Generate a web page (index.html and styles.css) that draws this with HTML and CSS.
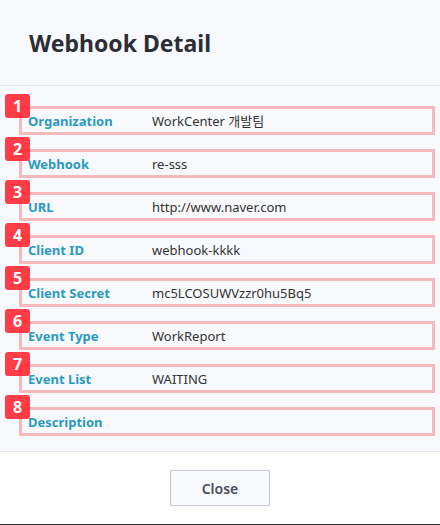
FILE: index.html
```html
<!DOCTYPE html>
<html lang="ko">
<head>
<meta charset="utf-8">
<title>Webhook Detail</title>
<link rel="stylesheet" href="styles.css">
</head>
<body>
<div class="modal">
  <header class="modal-header">
    <h1 class="modal-title">Webhook Detail</h1>
  </header>
  <section class="modal-body">
    <div class="row"><span class="badge">1</span><div class="field"><span class="label">Organization</span><span class="value">WorkCenter 개발팀</span></div></div>
    <div class="row"><span class="badge">2</span><div class="field"><span class="label">Webhook</span><span class="value">re-sss</span></div></div>
    <div class="row"><span class="badge">3</span><div class="field"><span class="label">URL</span><span class="value">http://www.naver.com</span></div></div>
    <div class="row"><span class="badge">4</span><div class="field"><span class="label">Client ID</span><span class="value">webhook-kkkk</span></div></div>
    <div class="row"><span class="badge">5</span><div class="field"><span class="label">Client Secret</span><span class="value">mc5LCOSUWVzzr0hu5Bq5</span></div></div>
    <div class="row"><span class="badge">6</span><div class="field"><span class="label">Event Type</span><span class="value">WorkReport</span></div></div>
    <div class="row"><span class="badge">7</span><div class="field"><span class="label">Event List</span><span class="value">WAITING</span></div></div>
    <div class="row"><span class="badge">8</span><div class="field"><span class="label">Description</span><span class="value"></span></div></div>
  </section>
  <footer class="modal-footer">
    <button class="btn-close" type="button">Close</button>
  </footer>
</div>
</body>
</html>
```
FILE: styles.css
```css
* { box-sizing: border-box; }
html, body { margin: 0; padding: 0; }
body {
  width: 440px;
  height: 525px;
  overflow: hidden;
  background: #ffffff;
  font-family: "Noto Sans", "Noto Sans CJK KR", sans-serif;
}
.modal {
  width: 440px;
  height: 525px;
  display: flex;
  flex-direction: column;
  border-bottom: 1px solid #333333;
}
.modal-header {
  height: 86px;
  background: #f8f9fc;
  border-bottom: 1px solid #e6e8ee;
  padding: 25px 0 0 29px;
}
.modal-title {
  margin: 0;
  font-size: 23px;
  font-weight: 700;
  line-height: 36px;
  color: #2c2e36;
}
.modal-body {
  background: #f8f9fc;
  border-bottom: 1px solid #e6e8ee;
  padding: 8px 5px 13px 5px;
  height: 366px;
}
.row {
  position: relative;
  padding: 12px 0 2px 14px;
}
.badge {
  position: absolute;
  left: 0;
  top: 0;
  width: 25px;
  height: 24px;
  border-radius: 3px;
  background: rgba(255, 40, 52, 0.9);
  color: #ffffff;
  font-size: 16px;
  font-weight: 700;
  line-height: 24px;
  text-align: center;
}
.field {
  height: 29px;
  border: 3px solid #f8b9bd;
  display: flex;
  align-items: center;
  padding-left: 6px;
  font-size: 13px;
  line-height: 18px;
}
.label {
  width: 124px;
  flex: none;
  font-weight: 700;
  color: #2a99bf;
  padding-top: 1px;
}
.value {
  color: #333333;
}
.modal-footer {
  flex: 1;
  background: #ffffff;
  display: flex;
  justify-content: center;
  padding-top: 18px;
}
.btn-close {
  width: 100px;
  height: 36px;
  border: 1px solid #c8c9d8;
  border-radius: 2px;
  background: #f8f9fc;
  color: #4a4d5c;
  font-family: "Noto Sans", sans-serif;
  font-size: 14px;
  font-weight: 600;
  padding: 0;
}
```
